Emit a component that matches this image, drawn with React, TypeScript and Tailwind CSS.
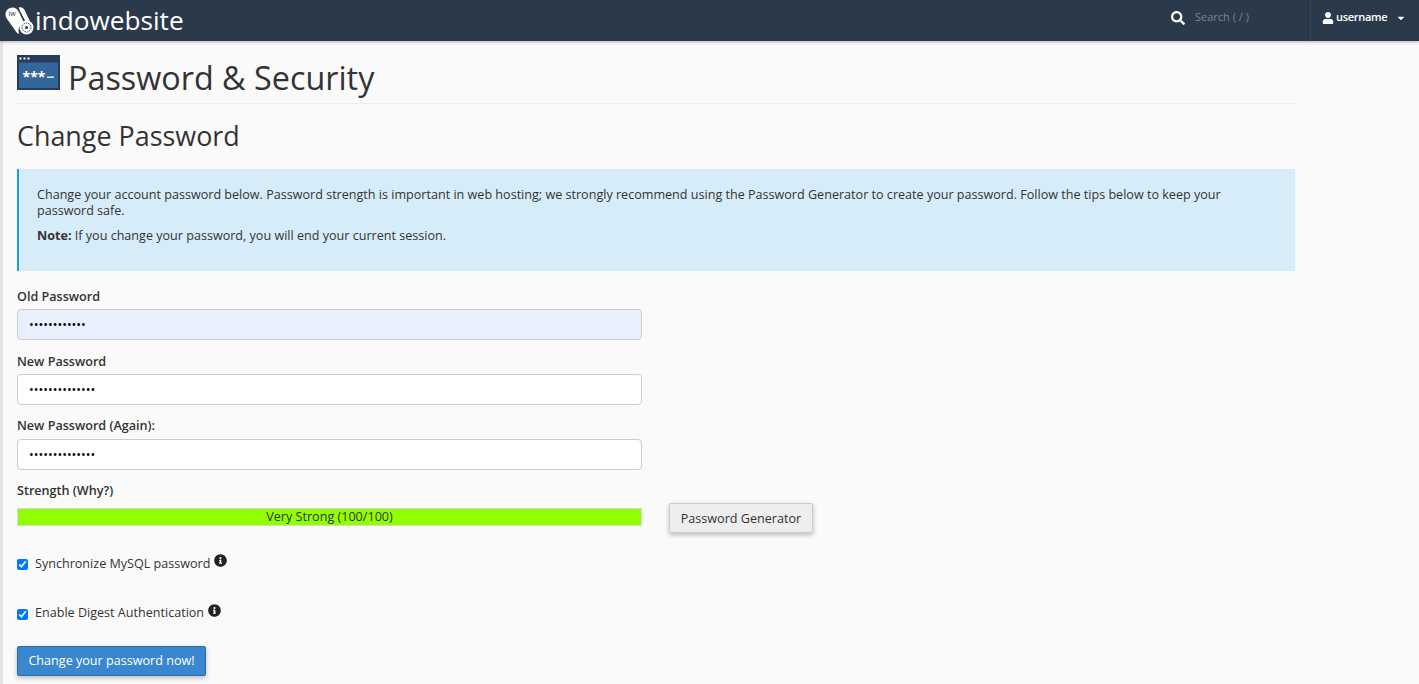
import { FaCaretDown, FaInfoCircle, FaSearch, FaUser } from "react-icons/fa";

function PageIcon() {
  return (
    <svg width="43" height="35" viewBox="0 0 43 35" className="shrink-0">
      <rect width="43" height="35" fill="#2a3a5c" />
      <rect x="2" y="7.5" width="39" height="25.5" fill="#336699" />
      <g fill="#fff">
        <rect x="2.5" y="2.5" width="2" height="2" />
        <rect x="6.5" y="2.5" width="2" height="2" />
        <rect x="10.5" y="2.5" width="2" height="2" />
      </g>
      <text x="5.500" y="26.500" fill="#fff" fontSize="14" fontWeight="700" fontFamily="'Open Sans', sans-serif">***</text>
      <rect x="30" y="21.500" width="7" height="1.300" fill="#fff" />
    </svg>
  );
}

function Logo() {
  return (
    <svg width="29" height="28" viewBox="0 0 29 28" className="shrink-0">
      <path d="M0.500 7.500C0.500 3.500 3.700.500 7.500.500c3 0 5.200 1.800 6.400 4.500l5 10.800c-2.600 1-4.600 3.300-5.200 6-.3 1.700-.2 3.300.3 5.200-1.600-.5-2.700-1.700-3.700-3.400L1.700 11.500C1 10.300.500 9 .500 7.500Z" fill="#fff" />
      <path d="M13.500.500c2.700-.8 5 .3 6.300 3l5.500 11.500c-1.500-.6-3-.7-4.600-.2L15.300 4.500C14.700 3 14.300 1.600 13.500.500Z" fill="#fff" />
      <circle cx="21.500" cy="20.500" r="7" fill="#fff" />
      <circle cx="21.500" cy="20.500" r="4.500" fill="none" stroke="#2a3a4b" strokeWidth="1" strokeDasharray="1.500 1" />
      <circle cx="21.500" cy="20.500" r="1.500" fill="#2a3a4b" />
      <text x="3.500" y="9" fill="#2a3a4b" fontSize="7" fontFamily="'Open Sans', sans-serif">iw</text>
    </svg>
  );
}

function Field({ label, value, autofill, labelClass }: { label: string; value: string; autofill?: boolean; labelClass: string }) {
  return (
    <div className="mb-[12px]">
      <label className={`block text-[12.6px] font-semibold leading-[18px] text-[#333] ${labelClass}`}>{label}</label>
      <input
        type="password"
        readOnly
        value={value}
        className={`block h-[31px] w-[625px] rounded-[4px] border border-[#ccc] px-[11px] text-[12.6px] text-black outline-none ${
          autofill ? "bg-[#e8f0fe]" : "bg-white"
        }`}
      />
    </div>
  );
}

function CheckRow({ label, className, labelClass }: { label: string; className: string; labelClass: string }) {
  return (
    <div className={`flex items-start ${className}`}>
      <input type="checkbox" checked readOnly className="m-0 mt-[5px] h-[11px] w-[11px] accent-[#0075ff]" />
      <span className={`ml-[7px] text-[12.58px] leading-[18px] text-[#333] ${labelClass}`}>{label}</span>
      <FaInfoCircle className="ml-[4px] text-[13px] text-[#222]" />
    </div>
  );
}

export default function App() {
  return (
    <div className="h-[684px] overflow-hidden bg-[#fafafa] font-['Open_Sans',sans-serif] text-[#333]">
      <header className="relative flex h-[41px] items-center justify-between bg-[#2a3a4b] shadow-[0_1px_3px_rgba(0,0,0,0.3)]">
        <div className="flex items-center pl-[5px]">
          <Logo />
          <span className="ml-[1px] text-[26.2px] font-medium leading-[41px] text-white">indowebsite</span>
        </div>
        <div className="flex h-full items-center">
          <FaSearch className="mb-[6px] text-[14px] text-white" />
          <span className="mb-[6px] ml-[10px] w-[115px] text-[11px] text-[#7c8590]">Search ( / )</span>
          <div className="flex h-full w-[109px] items-center border-l border-[#34465a] pb-[6px] pl-[11px] text-white">
            <FaUser className="text-[12px]" />
            <span className="ml-[2px] text-[11px] font-semibold tracking-[-0.3px]">username</span>
            <FaCaretDown className="ml-[9px] text-[10px]" />
          </div>
        </div>
      </header>

      <main className="h-[643px] border-l-[3px] border-[#e4e4e4] pl-[14px]">
        <div className="w-[1278px]">
          <div className="flex h-[63px] items-start border-b border-[#eee] pt-[13px]">
            <div className="mt-[1px] shrink-0">
              <PageIcon />
            </div>
            <h1 className="ml-[8px] text-[32.35px] leading-[46px] text-[#333]">Password &amp; Security</h1>
          </div>
          <h2 className="mt-[13px] text-[26.9px] leading-[38px] text-[#333]">Change Password</h2>
          <div className="mt-[14px] h-[102px] border-l-2 border-[#1a9fd8] bg-[#d7ecf9] pl-[18px] pr-[60px] pt-[18px] text-[12.58px] leading-[16px] text-[#333]">
            <p>
              Change your account password below. Password strength is important in web hosting; we strongly recommend using the Password Generator to create your password. Follow the tips below to keep your password safe.
            </p>
            <p className="mt-[9px]">
              <strong className="font-bold">Note:</strong> If you change your password, you will end your current session.
            </p>
          </div>

          <div className="mt-[16px]">
            <Field label="Old Password" value="............" autofill labelClass="mb-[3px] pt-[1px]" />
            <Field label="New Password" value=".............." labelClass="mb-[3px] pt-[1px]" />
            <Field label="New Password (Again):" value=".............." labelClass="mb-[4px]" />
          </div>

          <div className="-mt-[1px] pt-[1px] text-[12.6px] font-semibold leading-[18px]">Strength (Why?)</div>
          <div className="mt-[3px] flex items-center">
            <div className="mb-[2px] h-[18px] w-[625px] border border-[#d8d8d8] bg-[#91ff00] text-center text-[12.6px] leading-[15px] text-[#333]">
              Very Strong (100/100)
            </div>
            <button className="ml-[27px] h-[30px] w-[144px] rounded-[2px] border border-[#ccc] bg-[#eee] pt-[2px] text-[12.6px] text-[#333] shadow-[0_2px_5px_rgba(0,0,0,0.25)]">
              Password Generator
            </button>
          </div>

          <CheckRow label="Synchronize MySQL password" className="mt-[21px]" labelClass="mt-[1px]" />
          <CheckRow label="Enable Digest Authentication" className="mt-[31px]" labelClass="mt-0" />

          <button className="mt-[24px] block h-[30px] w-[189px] rounded-[2px] border border-[#2e6da4] bg-[#3a87cf] text-[12.6px] text-white shadow-[0_2px_5px_rgba(0,0,0,0.25)]">
            Change your password now!
          </button>
        </div>
      </main>
    </div>
  );
}
